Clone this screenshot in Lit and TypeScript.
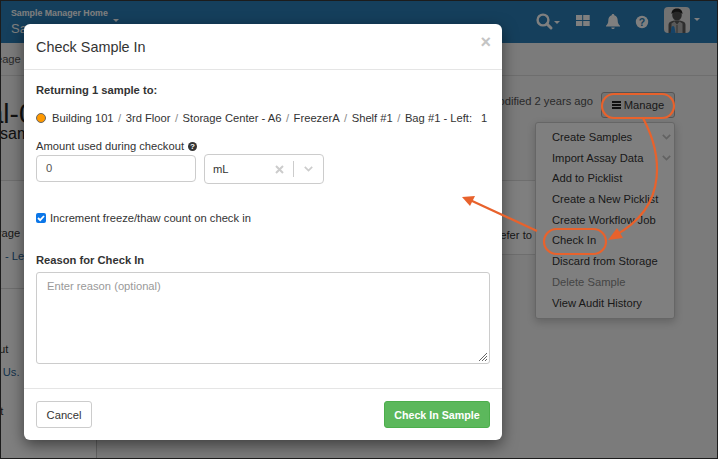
import { LitElement, html, css, svg } from "lit";
import { customElement } from "lit/decorators.js";

const menu = [
  ["Create Samples", "sub"],
  ["Import Assay Data", "sub"],
  ["Add to Picklist", ""],
  ["Create a New Picklist", ""],
  ["Create Workflow Job", ""],
  ["Check In", ""],
  ["Discard from Storage", ""],
  ["Delete Sample", "off"],
  ["View Audit History", ""],
];
const crumbs = ["Building 101", "3rd Floor", "Storage Center - A6", "FreezerA", "Shelf #1", "Bag #1 - Left:"];

const chevron = svg`<svg width="9" height="6" viewBox="0 0 9 6"><path d="M.8 .8L4.500 4.500 8.200 .8" fill="none" stroke="currentColor" stroke-width="1.700"/></svg>`;

@customElement("app-root")
export class AppRoot extends LitElement {
  static styles = css`
    :host { display: block; width: 718px; height: 459px; box-sizing: border-box; border: 1px solid #1c1c1c; position: relative; overflow: hidden; font-family: "Liberation Sans", Arial, sans-serif; font-size: 11.2px; color: #333; background: #f6f6f6; }
    .topbar { height: 42px; background: #2a7fb8; display: flex; position: relative; color: #fff; }
    .brand { padding: 7px 0 0 10px; width: 130px; }
    .brand b { display: flex; align-items: flex-end; font-size: 8.8px; line-height: 11px; white-space: nowrap; }
    .brand b svg { display: block; margin: 0 0 -3px 5px; }
    .brand span { display: block; font-size: 13px; line-height: 15px; margin-top: 2px; }
    .tools { margin-left: auto; display: flex; align-items: center; padding-right: 16px; }
    .tools svg { display: block; }
    .sub { height: 32px; border-bottom: 1px solid #dcdcdc; line-height: 32px; color: #555; text-indent: -20px; white-space: nowrap; }
    .titlerow { height: 104px; display: flex; position: relative; }
    .titles { padding-top: 25px; margin-left: -63px; }
    .titles h1 { margin: 0; font-size: 28px; font-weight: 400; line-height: 26px; white-space: nowrap; color: #222; }
    .titles p { margin: -2px 0 0 62px; font-size: 16px; line-height: 18px; white-space: nowrap; color: #222; }
    .actions { margin-left: auto; display: flex; gap: 8px; align-items: flex-start; padding: 16px 42px 0 0; }
    .mod { color: #555; line-height: 16px; margin-top: 1px; }
    .btn { box-sizing: border-box; width: 74px; height: 26px; border: 1px solid #aaa; border-radius: 3px; background: #e6e6e6; display: flex; align-items: center; justify-content: center; gap: 3px; color: #333; }
    .bars { width: 9px; height: 8px; border-top: 2px solid #222; border-bottom: 2px solid #222; position: relative; box-sizing: border-box; }
    .bars::after { content: ""; position: absolute; left: 0; right: 0; top: 1px; height: 2px; background: #222; }
    .content { display: grid; grid-template-columns: 96px 1fr; height: 277px; }
    .side { background: #fff; border-right: 1px solid #c4c4c4; border-top: 1px solid #ddd; white-space: nowrap; }
    .row { height: 21px; line-height: 21px; }
    .tall { height: 24px; line-height: 24px; }
    .blue { color: #2a6496; }
    .main { padding-right: 116px; }
    .panel { box-sizing: border-box; background: #fff; height: 75px; line-height: 16px; padding: 46px 69px 0 0; text-align: right; white-space: nowrap; border-top: 1px solid #ddd; border-bottom: 1px solid #ddd; }
    .menu { position: absolute; left: 534px; top: 121px; width: 140px; height: 197px; box-sizing: border-box; background: #fff; border: 1px solid #ccc; border-radius: 3px; box-shadow: 0 3px 8px rgba(0,0,0,.2); padding: 4px 0; }
    .menu div { height: 20.7px; line-height: 20.7px; padding: 0 3px 0 16px; display: flex; justify-content: space-between; align-items: center; white-space: nowrap; color: #333; }
    .menu .off { color: #8a8a8a; }
    .menu svg { display: block; color: #c4c4c4; }
    .backdrop { position: absolute; inset: 0; background: rgba(0,0,0,.5); }
    .modal { position: absolute; left: 23px; top: 23px; width: 478px; height: 416px; background: #fff; border-radius: 6px; box-shadow: 0 5px 15px rgba(0,0,0,.5); display: flex; flex-direction: column; color: #333; }
    .mhead { height: 46px; box-sizing: border-box; border-bottom: 1px solid #e5e5e5; display: flex; align-items: center; justify-content: space-between; padding: 0 12px; }
    .mhead h2 { margin: 0; font-size: 14.4px; font-weight: 400; color: #333; }
    .close { font-size: 18px; font-weight: 700; color: #c4c4c4; line-height: 14px; margin-top: -10px; margin-right: -1px; }
    .mbody { flex: 1; padding: 0 12px; display: flex; flex-direction: column; }
    .strong { font-weight: 700; color: #333; line-height: 14px; }
    .ret { margin-top: 13px; }
    .loc { display: flex; align-items: center; margin-top: 14px; height: 14px; white-space: nowrap; }
    .dot { box-sizing: border-box; width: 10px; height: 10px; border-radius: 50%; background: #f90; border: 1px solid #666; margin-right: 6px; flex: none; margin-top: -1px; }
    .sep { color: #888; padding: 0 4.500px; }
    .count { margin-left: 9px; }
    .amt { margin-top: 14px; line-height: 14px; display: flex; align-items: center; gap: 4px; }
    .amt svg { display: block; }
    .fields { display: flex; gap: 8px; align-items: flex-start; margin-top: 1px; }
    .input { box-sizing: border-box; width: 160px; height: 27px; margin-top: 1px; border: 1px solid #ccc; border-radius: 4px; padding: 0 0 0 9px; line-height: 25px; color: #555; }
    .select { box-sizing: border-box; width: 120px; height: 30px; border: 1px solid #ccc; border-radius: 4px; display: flex; align-items: center; padding-left: 8px; color: #333; }
    .select .val { flex: 1; }
    .select svg { display: block; }
    .x { color: #ccc; margin-right: 9px; }
    .vr { width: 1px; height: 16px; background: #ccc; }
    .ch { color: #ccc; margin: 0 10px; }
    .check { display: flex; align-items: center; margin-top: 26px; height: 16px; gap: 4px; }
    .box { width: 10px; height: 10px; background: #0b76e8; border-radius: 2px; display: block; flex: none; }
    .reason { margin-top: 27px; }
    .ta { box-sizing: border-box; height: 92px; margin-top: 5px; border: 1px solid #ccc; border-radius: 3px; padding: 7px 10px; color: #999; position: relative; }
    .grip { position: absolute; right: 1px; bottom: 1px; display: block; }
    .mfoot { height: 52px; box-sizing: border-box; border-top: 1px solid #e5e5e5; display: flex; justify-content: space-between; align-items: flex-start; padding: 12px 12px 0; }
    .cancel, .go { box-sizing: border-box; height: 27px; border-radius: 3px; display: flex; align-items: center; justify-content: center; }
    .cancel { width: 56px; border: 1px solid #ccc; color: #333; }
    .go { width: 106px; background: #5cb85c; border: 1px solid #4cae4c; color: #fff; font-weight: 700; font-size: 10.700px; }
    .notes { position: absolute; left: -1px; top: -1px; display: block; pointer-events: none; }
    .markwrap { height: 30px; padding-top: 13px; box-sizing: border-box; }
    .mark { width: 8px; height: 4px; background: #333; margin-left: 65px; }
    .sp42 { height: 42px; } .sp20 { height: 20px; border-bottom: 1px solid #ddd; } .sp50 { height: 50px; } .sp17 { height: 17px; }
    .i-st { text-indent: -20px; } .i-le { text-indent: 4px; } .i-ab { text-indent: -22px; } .i-us { text-indent: -7px; } .i-ot { text-indent: -7px; }
  `;

  render() {
    return html`
      <div class="topbar">
        <div class="brand">
          <b>Sample Manager Home<svg width="6" height="3" viewBox="0 0 6 3"><path d="M0 0h6L3 3z" fill="#fff"/></svg></b>
          <span>Samples</span>
        </div>
        <div class="tools">
          <svg width="166" height="30" viewBox="535 7 166 30">
            <g fill="#fff">
              <circle cx="543" cy="20" r="5.400" fill="none" stroke="#fff" stroke-width="2.400"/>
              <path d="M547 24l4 4" stroke="#fff" stroke-width="3" stroke-linecap="round"/>
              <path d="M554 21h6l-3 3z"/>
              <path d="M576 15h6.200v5h-6.200zM583.200 15h6.500v5h-6.500zM576 21h6.200v5h-6.200zM583.200 21h6.500v5h-6.500z"/>
              <path d="M613 14c.8 0 1.300.5 1.300 1.300 2.400.8 3.400 2.800 3.400 5.200 0 2.700.8 3.800 2.300 5.200v.8h-14v-.8c1.500-1.400 2.300-2.500 2.300-5.200 0-2.400 1-4.400 3.400-5.200 0-.8.500-1.300 1.300-1.300zM611.200 27.500h3.600c-.2 1-1 1.500-1.800 1.500s-1.600-.5-1.800-1.500z"/>
              <circle cx="642" cy="22" r="6.200"/>
              <text x="642" y="25.800" font-family="Liberation Sans" font-size="10.500" font-weight="700" text-anchor="middle" fill="#2a7fb8">?</text>
              <rect x="664" y="7" width="26" height="26" rx="4" fill="#e4e4e4"/>
              <path d="M668.500 33v-8c0-3 2.500-4.500 8.500-4.500s8.500 1.500 8.500 4.500v8z" fill="#5c5c5c"/>
              <path d="M671.500 33v-9.500l3-2 2.500 3 2.500-3 3 2V33z" fill="#b4b4b4"/>
              <ellipse cx="677" cy="15" rx="4.800" ry="5.600" fill="#4e4e4e"/>
              <path d="M671.500 14c0-4 2.500-5.500 5.500-5.500s5.500 1.500 5.500 5.500c-2-1.800-3-2.300-5.500-2.300s-3.500.5-5.500 2.300z" fill="#222"/>
              <path d="M676 25h2v8h-2z" fill="#8a8a8a"/>
              <path d="M670.500 33l.8-4.500c0-1.500.8-2.500 1.700-2.500s1.700 1 1.700 2.500l.8 4.500z" fill="#2a86d0"/>
              <path d="M694 18h6l-3 3z"/>
            </g>
          </svg>
        </div>
      </div>
      <div class="sub">Lineage</div>
      <div class="titlerow">
        <div class="titles">
          <h1>Serial-0001</h1>
          <p>sample</p>
        </div>
        <div class="actions">
          <span class="mod">Modified 2 years ago</span>
          <span class="btn"><i class="bars"></i>Manage</span>
        </div>
      </div>
      <div class="content">
        <div class="side">
          <div class="sp42"></div>
          <div class="row i-st">Storage</div>
          <div class="blue tall i-le">- Left</div>
          <div class="sp20"></div>
          <div class="sp50"></div>
          <div class="row i-ab">About</div>
          <div class="blue tall i-us">s Us.</div>
          <div class="sp17"></div>
          <div class="row i-ot">ot</div>
          <div class="markwrap"><div class="mark"></div></div>
          <div class="row">2021-11-12</div>
        </div>
        <div class="main"><div class="panel">Please refer to</div></div>
      </div>
      <div class="menu">
        ${menu.map(([t, k]) => html`<div class=${k === "off" ? "off" : ""}><span>${t}</span>${k === "sub" ? chevron : ""}</div>`)}
      </div>
      <div class="backdrop"></div>
      <div class="modal">
        <div class="mhead"><h2>Check Sample In</h2><span class="close">×</span></div>
        <div class="mbody">
          <div class="strong ret">Returning 1 sample to:</div>
          <div class="loc">
            <i class="dot"></i>
            ${crumbs.map((c, i) => html`${i ? html`<span class="sep">/</span>` : ""}<span>${c}</span>`)}
            <span class="count">1</span>
          </div>
          <div class="amt">Amount used during checkout
            <svg width="9" height="9" viewBox="0 0 10 10"><circle cx="5" cy="5" r="5" fill="#333"/><text x="5" y="8.300" font-family="Liberation Sans" font-size="9" font-weight="700" text-anchor="middle" fill="#fff">?</text></svg>
          </div>
          <div class="fields">
            <div class="input">0</div>
            <div class="select">
              <span class="val">mL</span>
              <svg class="x" width="9" height="9" viewBox="0 0 9 9"><path d="M1 1l7 7M8 1l-7 7" stroke="currentColor" stroke-width="2"/></svg>
              <i class="vr"></i>
              <span class="ch">${chevron}</span>
            </div>
          </div>
          <div class="check">
            <svg class="box" viewBox="0 0 10 10"><path d="M2 5l2.200 2.200L8 3" fill="none" stroke="#fff" stroke-width="1.800"/></svg>
            <span>Increment freeze/thaw count on check in</span>
          </div>
          <div class="strong reason">Reason for Check In</div>
          <div class="ta">Enter reason (optional)
            <svg class="grip" width="10" height="10" viewBox="0 0 10 10"><path d="M1 9l8-8M4 9l5-5M7 9l2-2" stroke="#666" stroke-width="1"/></svg>
          </div>
        </div>
        <div class="mfoot"><span class="cancel">Cancel</span><span class="go">Check In Sample</span></div>
      </div>
      <svg class="notes" width="718" height="459" viewBox="0 0 718 459" fill="none" stroke="#e8622c" stroke-width="2.200">
        <rect x="602" y="94" width="72" height="24" rx="12"/>
        <rect x="544" y="229" width="62" height="25" rx="12.500"/>
        <path d="M643 118C660 150 672 205 614 236"/>
        <path d="M608 240l9-12 6 10z" fill="#e8622c" stroke="none"/>
        <path d="M537 231L470 200"/>
        <path d="M462 197l13-1-5 10z" fill="#e8622c" stroke="none"/>
      </svg>
    `;
  }
}
